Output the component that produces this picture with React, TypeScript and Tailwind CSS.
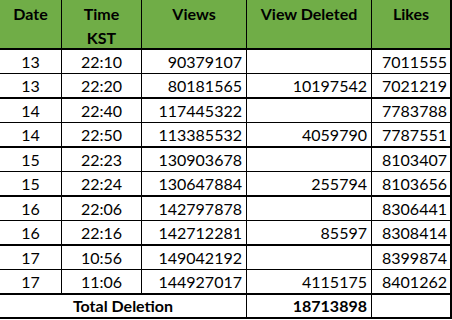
import React from "react";

type Row = {
  date: string;
  time: string;
  views: string;
  deleted?: string;
  likes: string;
};

const rows: Row[] = [
  { date: "13", time: "22:10", views: "90379107", likes: "7011555" },
  { date: "13", time: "22:20", views: "80181565", deleted: "10197542", likes: "7021219" },
  { date: "14", time: "22:40", views: "117445322", likes: "7783788" },
  { date: "14", time: "22:50", views: "113385532", deleted: "4059790", likes: "7787551" },
  { date: "15", time: "22:23", views: "130903678", likes: "8103407" },
  { date: "15", time: "22:24", views: "130647884", deleted: "255794", likes: "8103656" },
  { date: "16", time: "22:06", views: "142797878", likes: "8306441" },
  { date: "16", time: "22:16", views: "142712281", deleted: "85597", likes: "8308414" },
  { date: "17", time: "10:56", views: "149042192", likes: "8399874" },
  { date: "17", time: "11:06", views: "144927017", deleted: "4115175", likes: "8401262" },
];

const App: React.FC = () => {
  return (
    <div className="h-[320px] w-[452px] bg-white font-['Lato','Liberation_Sans',sans-serif] text-[16px] text-black">
      {/* Header */}
      <div className="flex h-[50px] border-b-2 border-black bg-[#70ad47] font-bold leading-[24px]">
        <div className="w-[62px] border-r border-black pt-[2px] text-center">Date</div>
        <div className="w-[80px] border-r border-black pt-[2px] text-center">
          Time
          <br />
          KST
        </div>
        <div className="w-[105px] border-r border-black pt-[2px] text-center">Views</div>
        <div className="w-[125px] border-r border-black pt-[2px] text-center">View Deleted</div>
        <div className="w-[80px] border-r-2 border-black pt-[2px] text-center">Likes</div>
      </div>

      {/* Body */}
      {rows.map((r, i) => (
        <div
          key={i}
          className={`flex h-[24px] items-center border-black leading-[23px] ${
            i % 2 === 0 ? "border-b" : "h-[25px] border-b-2"
          }`}
        >
          <div className="h-full w-[62px] border-r border-black text-center">{r.date}</div>
          <div className="h-full w-[80px] border-r border-black text-center">{r.time}</div>
          <div className="h-full w-[105px] border-r border-black pr-[4px] text-right">{r.views}</div>
          <div className="h-full w-[125px] border-r border-black pr-[4px] text-right">{r.deleted ?? ""}</div>
          <div className="h-full w-[80px] border-r-2 border-black pr-[3px] text-right">{r.likes}</div>
        </div>
      ))}

      {/* Total */}
      <div className="flex h-[24px] border-b-2 border-black font-bold leading-[22px]">
        <div className="h-full w-[247px] border-r border-black text-center">Total Deletion</div>
        <div className="h-full w-[125px] border-r border-black pr-[4px] text-right">18713898</div>
        <div className="h-full w-[80px] border-r-2 border-black" />
      </div>
    </div>
  );
};

export default App;
